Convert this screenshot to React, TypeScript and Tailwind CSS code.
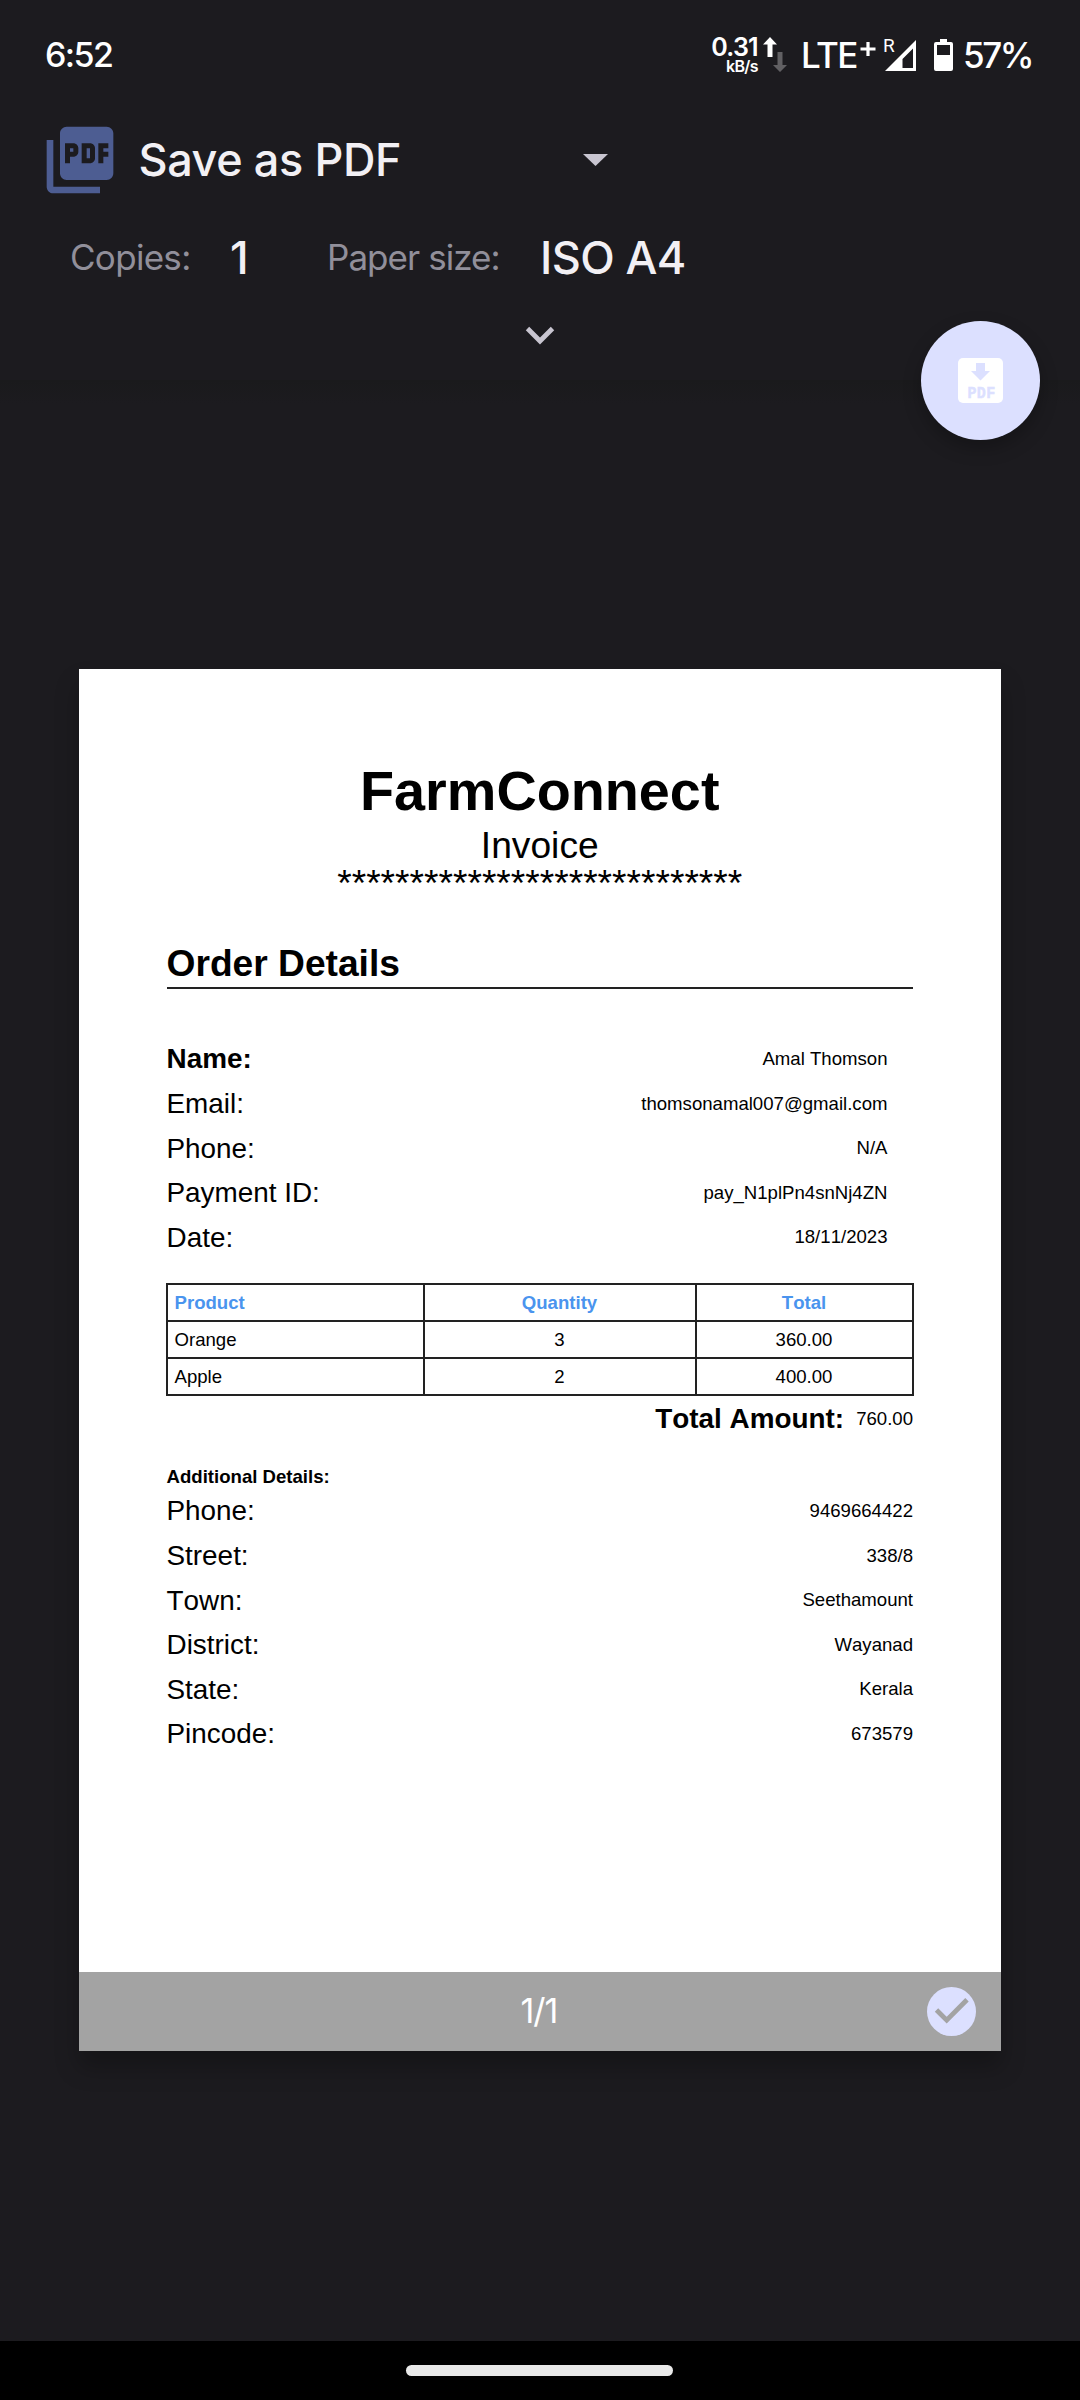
import React from 'react';
import { MdPictureAsPdf } from 'react-icons/md';

const orderRows = [
  { label: 'Name:', value: 'Amal Thomson', bold: true },
  { label: 'Email:', value: 'thomsonamal007@gmail.com' },
  { label: 'Phone:', value: 'N/A' },
  { label: 'Payment ID:', value: 'pay_N1plPn4snNj4ZN' },
  { label: 'Date:', value: '18/11/2023' },
];

const addressRows = [
  { label: 'Phone:', value: '9469664422' },
  { label: 'Street:', value: '338/8' },
  { label: 'Town:', value: 'Seethamount' },
  { label: 'District:', value: 'Wayanad' },
  { label: 'State:', value: 'Kerala' },
  { label: 'Pincode:', value: '673579' },
];

const products = [
  ['Orange', '3', '360.00'],
  ['Apple', '2', '400.00'],
];

function StatusBar() {
  return (
    <div className="flex h-[110px] items-center pl-[45px] pr-[48px] font-medium text-white">
      <span className="text-[34px] leading-none tracking-[-1.600px]">6:52</span>
      <div className="ml-auto flex items-center whitespace-nowrap">
        <div className="flex flex-col items-end">
          <span className="text-[25px] font-semibold leading-[21px] tracking-[-0.700px]">0.31</span>
          <span className="text-[16px] font-semibold leading-[16px] tracking-[-0.600px]">kB/s</span>
        </div>
        <svg className="ml-[4px] h-[36px] w-[26px]" viewBox="0 0 26 36">
          <path d="M8 0L15 7.5H10.5V20H5.500V7.500H1Z" fill="#fff" />
          <path d="M18 35L11 28H15.500V15H20.500V28H25Z" fill="#616063" />
        </svg>
        <span className="ml-[13px] w-[57px] text-[35px] leading-none tracking-[-1.600px]">LTE</span>
        <svg className="ml-[2px] h-[36px] w-[16px]" viewBox="0 0 16 36">
          <path d="M8 5V19M0.500 12H15.500" stroke="#fff" strokeWidth="3.200" />
        </svg>
        <div className="relative ml-[9px] h-[34px] w-[32px]">
          <span className="absolute -left-[2px] -top-[2px] font-['Roboto'] text-[19px] font-normal leading-none">R</span>
          <svg className="h-[34px] w-[32px]" viewBox="0 0 32 34">
            <path fillRule="evenodd" d="M0 33L31 2V33ZM17.500 30H28V10.500L17.500 21Z" fill="#fff" />
          </svg>
        </div>
        <svg className="ml-[17px] h-[34px] w-[19px]" viewBox="0 0 19 34">
          <path fillRule="evenodd" d="M6 1H13V4H17Q19 4 19 6V31Q19 33 17 33H2Q0 33 0 31V6Q0 4 2 4H6ZM3 7V17H16V7Z" fill="#fff" />
        </svg>
        <span className="ml-[10px] w-[69px] text-[35px] leading-none tracking-[-2.400px]">57%</span>
      </div>
    </div>
  );
}

function PrintOptions() {
  return (
    <div className="relative h-[270px]">
      <div className="flex h-[100px] items-center pl-[40px]">
        <MdPictureAsPdf className="size-[80px] shrink-0 text-[#4d5d92]" />
        <span className="-mt-[2px] ml-[18.500px] w-[444.500px] whitespace-nowrap text-[45px] font-medium leading-none tracking-[-0.400px] text-[#f2f0f4]">Save as PDF</span>
        <svg className="h-[12px] w-[25px]" viewBox="0 0 25 12">
          <path d="M0 0H25L12.500 12Z" fill="#c8c5d0" />
        </svg>
      </div>
      <div className="flex h-[94px] items-center whitespace-nowrap leading-none">
        <span className="ml-[70px] w-[160px] text-[35px] tracking-[-0.700px] text-[#918f9a]">Copies:</span>
        <span className="w-[97px] text-[45px] font-medium text-[#f2f0f4]">1</span>
        <span className="w-[213px] text-[35px] tracking-[-0.950px] text-[#918f9a]">Paper size:</span>
        <span className="text-[45px] font-medium tracking-[-0.600px] text-[#f2f0f4]">ISO A4</span>
      </div>
      <svg className="mx-auto mt-[22px] h-[20px] w-[30px]" viewBox="0 0 30 20">
        <path d="M2.500 2.500L15 15L27.500 2.500" fill="none" stroke="#c8c5d0" strokeWidth="4.800" />
      </svg>
      <button className="absolute right-[40px] top-[211px] flex size-[119px] items-center justify-center rounded-full bg-[#dce0ff] shadow-[0_8px_18px_rgba(0,0,0,0.25)]">
        <svg className="size-[45px]" viewBox="0 0 45 45">
          <rect width="45" height="45" rx="5" fill="#fff" />
          <path d="M18 5H27V13H32L22.500 22.500L13 13H18Z" fill="#dce0ff" />
          <text x="9.500" y="39.500" fontSize="17" letterSpacing="0.400" textLength="28" lengthAdjust="spacingAndGlyphs" fontWeight="700" fontFamily="Liberation Mono" fill="#dce0ff" stroke="#dce0ff" strokeWidth="0.500">PDF</text>
        </svg>
      </button>
    </div>
  );
}

function DetailRow({ label, value, bold = false }: { label: string; value: string; bold?: boolean }) {
  return (
    <div className="flex h-[44.620px] items-center justify-between">
      <span className={bold ? 'text-[27.890px] font-bold' : 'text-[27.890px]'}>{label}</span>
      <span className="text-[18.600px]">{value}</span>
    </div>
  );
}

function Invoice() {
  return (
    <div className="h-[1303px] bg-white pl-[87.500px] pr-[88px] pt-[89px] font-['Liberation_Sans',Arial,sans-serif] leading-none text-black [font-kerning:none]">
      <h1 className="h-[66px] text-center text-[55.780px] font-bold leading-[66px]">FarmConnect</h1>
      <p className="h-[42px] text-center text-[37.190px] leading-[42px]">Invoice</p>
      <p className="h-[42px] text-center text-[37.190px] leading-[35px]">****************************</p>
      <h2 className="mt-[34px] h-[47px] border-b-[2px] border-[#222] text-[37.190px] font-bold leading-[43px]">Order Details</h2>
      <div className="mt-[48px] pr-[25.500px]">
        {orderRows.map((r) => (
          <DetailRow key={r.label} {...r} />
        ))}
      </div>
      <table className="-ml-px mt-[23px] w-[748px] table-fixed border-collapse text-[18.600px]">
        <colgroup>
          <col className="w-[257px]" />
          <col className="w-[272px]" />
          <col />
        </colgroup>
        <thead>
          <tr className="h-[37px] text-[#4a94ee]">
            <th className="border-[2px] border-[#222] pl-[7px] pt-[2px] text-left">Product</th>
            <th className="border-[2px] border-[#222] pt-[2px]">Quantity</th>
            <th className="border-[2px] border-[#222] pt-[2px]">Total</th>
          </tr>
        </thead>
        <tbody>
          {products.map(([name, quantity, total]) => (
            <tr key={name} className="h-[37px] text-center">
              <td className="border-[2px] border-[#222] pl-[7px] pt-[2px] text-left">{name}</td>
              <td className="border-[2px] border-[#222] pt-[2px]">{quantity}</td>
              <td className="border-[2px] border-[#222] pt-[2px]">{total}</td>
            </tr>
          ))}
        </tbody>
      </table>
      <div className="flex h-[46px] items-center justify-end gap-[12px]">
        <span className="text-[27.890px] font-bold">Total Amount:</span>
        <span className="text-[18.600px]">760.00</span>
      </div>
      <h3 className="mb-px mt-[24px] h-[22px] text-[18.600px] font-bold leading-[22px]">Additional Details:</h3>
      {addressRows.map((r) => (
        <DetailRow key={r.label} {...r} />
      ))}
    </div>
  );
}

export default function App() {
  return (
    <div className="flex h-[2400px] w-[1080px] flex-col overflow-hidden bg-[#1b1b1d] font-['Inter',Roboto,sans-serif]">
      <div className="bg-[#1c1b1f]">
        <StatusBar />
        <PrintOptions />
      </div>
      <main className="flex-1 bg-[#1c1b1f] bg-[linear-gradient(#1a1a1c,#1c1b1f_24px)] pt-[289px]">
        <div className="mx-auto w-[922px] shadow-[0_16px_22px_rgba(0,0,0,0.25)]">
          <Invoice />
          <div className="relative flex h-[79px] items-center justify-center bg-[#a3a3a3] text-[34px] tracking-[-1px] text-white">
            <span className="-mt-[2px] mr-[2px]">1/1</span>
            <svg className="absolute right-[25px] top-[15px] size-[49px]" viewBox="0 0 49 49">
              <circle cx="24.500" cy="24.500" r="24.500" fill="#dce0ff" />
              <path d="M9.500 23L19.700 33.200L40 12.800" fill="none" stroke="#a3a3a3" strokeWidth="4.800" />
            </svg>
          </div>
        </div>
      </main>
      <nav className="flex h-[59px] justify-center bg-black pr-[2px] pt-[24px]">
        <div className="h-[11px] w-[267px] rounded-full bg-[#e9e9e9]" />
      </nav>
    </div>
  );
}
